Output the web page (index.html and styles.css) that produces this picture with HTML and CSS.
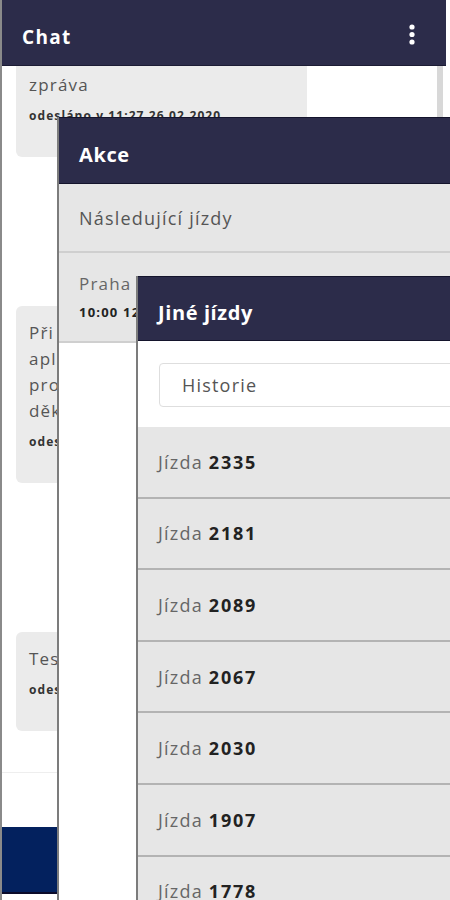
FILE: index.html
```html
<!DOCTYPE html>
<html lang="cs">
<head>
<meta charset="utf-8">
<title>Chat</title>
<link rel="stylesheet" href="styles.css">
</head>
<body>
<div class="chat">
  <div class="chat-header">
    <span class="title">Chat</span>
    <svg class="kebab" width="6" height="21" viewBox="0 0 6 21"><circle cx="3" cy="3" r="2.6" fill="#fff"/><circle cx="3" cy="10.5" r="2.6" fill="#fff"/><circle cx="3" cy="18" r="2.6" fill="#fff"/></svg>
  </div>
  <div class="messages">
    <div class="msg-list">
      <div class="bubble">
        <div class="msg-text">zpráva</div>
        <div class="msg-meta">odesláno v 11:27 26.02.2020</div>
      </div>
      <div class="bubble">
        <div class="msg-text">Při testování jsme zjistili,<br>aplikace nefunguje správně,<br>prosím o opravu chyby,<br>děkuji</div>
        <div class="msg-meta">odesláno v 11:31 26.02.2020</div>
      </div>
      <div class="bubble">
        <div class="msg-text">Test</div>
        <div class="msg-meta">odesláno v 11:40 26.02.2020</div>
      </div>
    </div>
    <div class="scrollbar"></div>
  </div>
  <div class="chat-footer">
    <div class="send-bar"></div>
  </div>
</div>

<div class="panel panel-akce">
  <div class="panel-header">Akce</div>
  <div class="akce-row">Následující jízdy</div>
  <div class="akce-row akce-trip">
    <div class="trip-place">Praha – Brno</div>
    <div class="trip-time">10:00 12.03.2020</div>
  </div>
</div>

<div class="panel panel-jine">
  <div class="panel-header">Jiné jízdy</div>
  <div class="search-wrap">
    <div class="search-box">Historie</div>
  </div>
  <div class="ride">Jízda <b>2335</b></div>
  <div class="ride">Jízda <b>2181</b></div>
  <div class="ride">Jízda <b>2089</b></div>
  <div class="ride">Jízda <b>2067</b></div>
  <div class="ride">Jízda <b>2030</b></div>
  <div class="ride">Jízda <b>1907</b></div>
  <div class="ride">Jízda <b>1778</b></div>
</div>
</body>
</html>
```

FILE: styles.css
```css
* { box-sizing: border-box; }
body {
  margin: 0;
  width: 450px;
  height: 900px;
  overflow: hidden;
  position: relative;
  background: #fff;
  font-family: "Open Sans", "Noto Sans", sans-serif;
  letter-spacing: 0.075em;
}
.chat {
  width: 446px;
  height: 900px;
  border-left: 2px solid #8a8a8a;
  display: flex;
  flex-direction: column;
}
.chat-header {
  height: 66px;
  flex: none;
  background: #2c2c4a;
  border-bottom: 1px solid #1c1c34;
  display: flex;
  align-items: center;
  justify-content: space-between;
  padding: 8px 31px 0 20px;
  color: #fff;
}
.kebab { margin-top: -4px; }
.title {
  font-size: 19px;
  font-weight: 700;
  letter-spacing: 0.07em;
}
.messages {
  height: 706px;
  flex: none;
  display: flex;
  overflow: hidden;
}
.msg-list {
  flex: 1;
  margin-top: -8px;
  padding-left: 14px;
  display: flex;
  flex-direction: column;
  gap: 149px;
}
.bubble {
  width: 291px;
  background: #ebebeb;
  border-radius: 6px;
  padding: 14px 13px 31px;
}
.msg-text {
  font-size: 17px;
  line-height: 26px;
  color: #555;
}
.msg-meta {
  margin-top: 8px;
  font-size: 12px;
  line-height: 20px;
  font-weight: 700;
  color: #333;
  letter-spacing: 0.09em;
}
.scrollbar {
  width: 6px;
  margin-right: 3px;
  background: #d8d8d8;
}
.chat-footer {
  border-top: 1px solid #eeeeee;
  padding-top: 54px;
}
.send-bar {
  height: 67px;
  background: #03215e;
  border-bottom: 2px solid #0b0b2a;
}

.panel {
  position: absolute;
  right: -20px;
  bottom: 0;
  background: #fff;
  border-left: 2px solid #7c7c7c;
}
.panel-akce { left: 57px; top: 117px; }
.panel-jine { left: 136px; top: 276px; }
.panel-header {
  background: #2c2c4a;
  color: #fff;
  font-size: 20px;
  font-weight: 700;
  letter-spacing: 0.03em;
  display: flex;
  align-items: center;
  padding: 8px 0 0 20px;
  border-top: 1px solid #14142c;
  border-bottom: 1px solid #14142c;
}
.panel-akce .panel-header { height: 67px; }
.panel-jine .panel-header { height: 65px; }
.akce-row {
  background: #e6e6e6;
  padding-left: 20px;
  color: #555;
  font-size: 18px;
  height: 69px;
  display: flex;
  align-items: center;
  border-bottom: 2px solid #cfcfcf;
}
.akce-trip {
  height: 90px;
  flex-direction: column;
  align-items: flex-start;
  justify-content: center;
  padding-bottom: 0;
}
.trip-place {
  font-size: 17px;
  line-height: 26px;
  color: #666;
}
.trip-time {
  margin-top: 4px;
  font-size: 13px;
  line-height: 22px;
  font-weight: 700;
  color: #222;
}
.search-wrap {
  padding: 22px 0 20px 21px;
}
.search-box {
  height: 44px;
  border: 1px solid #dedede;
  border-radius: 4px;
  padding-left: 22px;
  display: flex;
  align-items: center;
  font-size: 18px;
  color: #555;
}
.ride {
  height: 71.6px;
  background: #e6e6e6;
  border-bottom: 2px solid #b3b3b3;
  padding-left: 20px;
  display: flex;
  align-items: center;
  gap: 6px;
  font-size: 18px;
  color: #666;
}
.ride b {
  color: #222;
  font-weight: 700;
  letter-spacing: 0.1em;
}
```
